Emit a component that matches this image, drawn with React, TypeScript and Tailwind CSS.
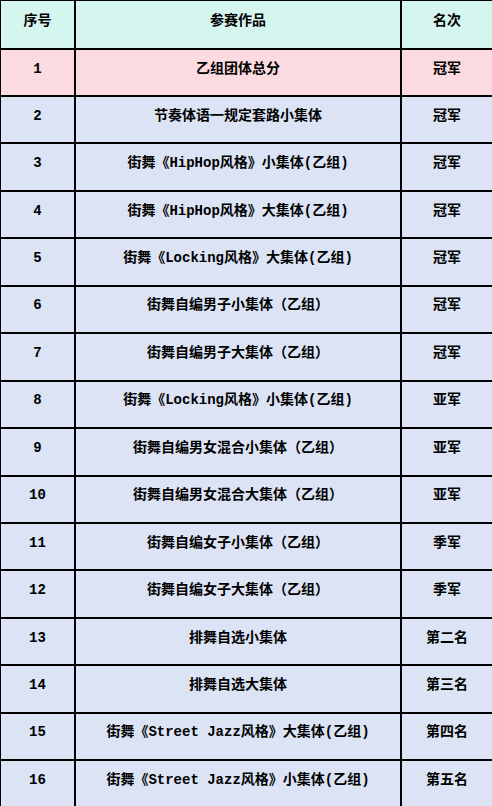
const rows = [
  ['1', '乙组团体总分', '冠军'],
  ['2', '节奏体语一规定套路小集体', '冠军'],
  ['3', '街舞《HipHop风格》小集体(乙组)', '冠军'],
  ['4', '街舞《HipHop风格》大集体(乙组)', '冠军'],
  ['5', '街舞《Locking风格》大集体(乙组)', '冠军'],
  ['6', '街舞自编男子小集体（乙组）', '冠军'],
  ['7', '街舞自编男子大集体（乙组）', '冠军'],
  ['8', '街舞《Locking风格》小集体(乙组)', '亚军'],
  ['9', '街舞自编男女混合小集体（乙组）', '亚军'],
  ['10', '街舞自编男女混合大集体（乙组）', '亚军'],
  ['11', '街舞自编女子小集体（乙组）', '季军'],
  ['12', '街舞自编女子大集体（乙组）', '季军'],
  ['13', '排舞自选小集体', '第二名'],
  ['14', '排舞自选大集体', '第三名'],
  ['15', '街舞《Street Jazz风格》大集体(乙组)', '第四名'],
  ['16', '街舞《Street Jazz风格》小集体(乙组)', '第五名'],
];

const cell = 'border-2 border-black text-center align-middle pb-[7px] p-0';

export default function App() {
  return (
    <div
      className="w-[492px] h-[806px] overflow-hidden bg-white text-[14px] font-bold text-black"
      style={{ fontFamily: '"Liberation Mono", "Noto Sans CJK SC", monospace' }}
    >
      <table className="w-[493px] table-fixed border-collapse -ml-px -mt-px">
        <colgroup>
          <col className="w-[75px]" />
          <col className="w-[326px]" />
          <col className="w-[92px]" />
        </colgroup>
        <thead>
          <tr className="h-[49px] bg-[#d5f5ef]">
            <th className={cell}>序号</th>
            <th className={cell}>参赛作品</th>
            <th className={cell}>名次</th>
          </tr>
        </thead>
        <tbody>
          {rows.map(([n, name, rank], i) => (
            <tr key={n} className={i === 0 ? 'h-[47px] bg-[#fbdbdf]' : 'h-[47.45px] bg-[#dbe3f4]'}>
              <td className={cell}>{n}</td>
              <td className={cell}>{name}</td>
              <td className={cell}>{rank}</td>
            </tr>
          ))}
        </tbody>
      </table>
    </div>
  );
}
